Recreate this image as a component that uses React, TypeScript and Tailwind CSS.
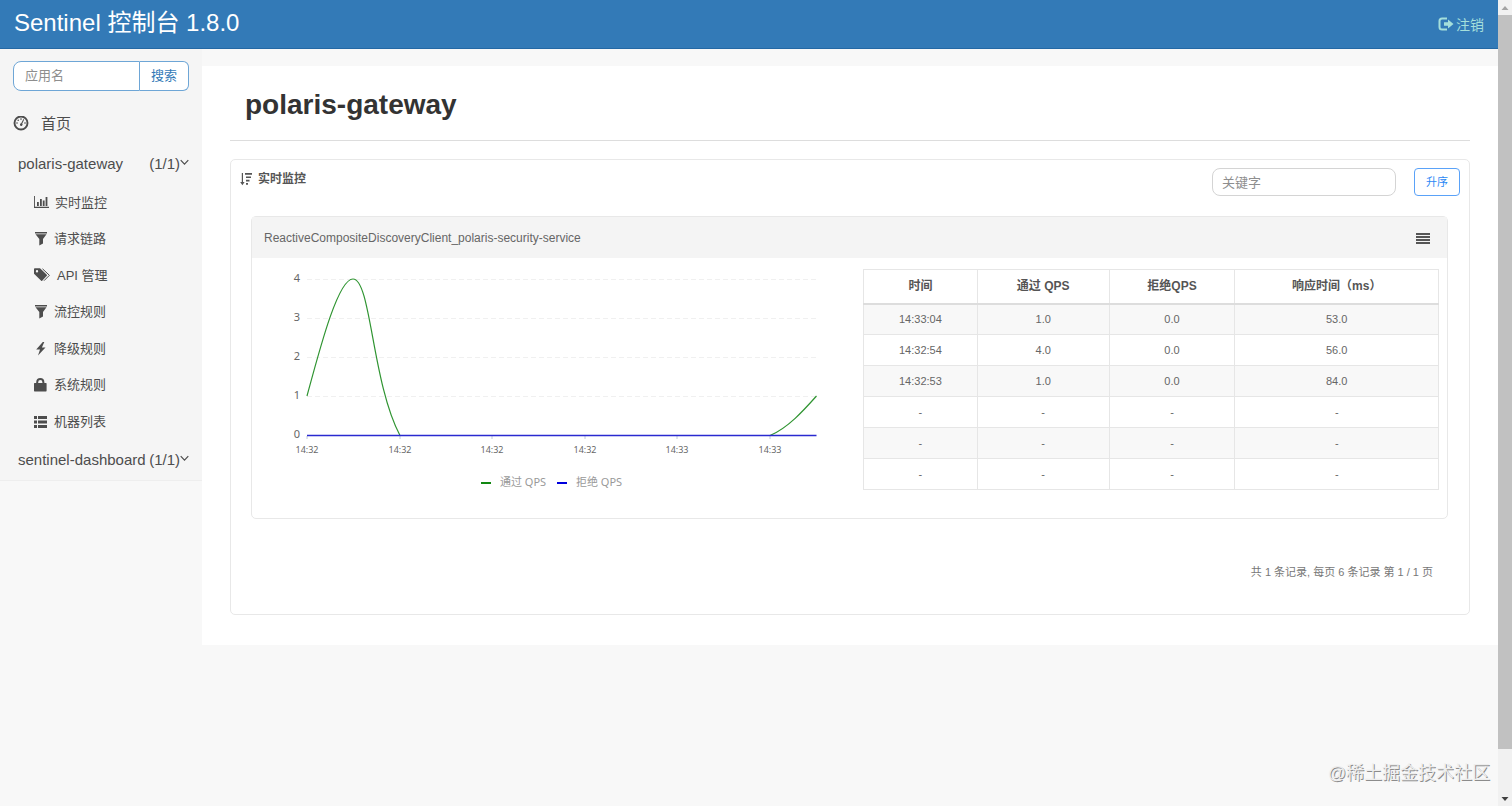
import React, { useState } from 'react';

const MENU = [
  { name: '实时监控', icon: 'stats' },
  { name: '请求链路', icon: 'filter' },
  { name: 'API 管理', icon: 'tags' },
  { name: '流控规则', icon: 'filter' },
  { name: '降级规则', icon: 'flash' },
  { name: '系统规则', icon: 'lock' },
  { name: '机器列表', icon: 'list' },
];

const METRICS = [
  ['14:33:04', '1.0', '0.0', '53.0'],
  ['14:32:54', '4.0', '0.0', '56.0'],
  ['14:32:53', '1.0', '0.0', '84.0'],
  ['-', '-', '-', '-'],
  ['-', '-', '-', '-'],
  ['-', '-', '-', '-'],
];

const Y_TICKS = [
  { label: '4', y: 21 },
  { label: '3', y: 60 },
  { label: '2', y: 99 },
  { label: '1', y: 138 },
  { label: '0', y: 177 },
];

const X_TICKS = [
  { label: '14:32', x: 55 },
  { label: '14:32', x: 148 },
  { label: '14:32', x: 240 },
  { label: '14:32', x: 333 },
  { label: '14:33', x: 425 },
  { label: '14:33', x: 518 },
];

const MenuIcon: React.FC<{ name: string }> = ({ name }) => {
  switch (name) {
    case 'stats':
      return (
        <svg width="15" height="14" viewBox="0 0 15 14" fill="currentColor">
          <path d="M0 1h.9v10.700H15v1.200H0z" />
          <path d="M3 7h1.800v4H3zM6 4h1.800v7H6zM8.800 5.500h1.800V11H8.800zM11.600 2h1.800v9h-1.800z" />
        </svg>
      );
    case 'filter':
      return (
        <svg width="14" height="14" viewBox="0 0 14 14" fill="currentColor">
          <path d="M1 0h12v1.500H1zM1.500 2.200h11L9 7v4.500L5.300 13.500V7z" />
        </svg>
      );
    case 'tags':
      return (
        <svg width="17" height="14" viewBox="0 0 17 14" fill="currentColor">
          <path fillRule="evenodd" d="M0 1.200Q0 .3.8.3H6l6.800 6.500q.5.5 0 1L8.200 12.700q-.5.5-1 0L0 5.800zM3 2a1.200 1.200 0 1 0 0 2.400A1.200 1.200 0 0 0 3 2z" />
          <path d="M8.500.8l6.900 6.500-5.400 5.400" fill="none" stroke="currentColor" strokeWidth="1" />
        </svg>
      );
    case 'flash':
      return (
        <svg width="14" height="14" viewBox="0 0 14 14" fill="currentColor">
          <path d="M8.800 0L2.200 7.400h3.800L4 13.500l7.500-8H7.900L10.300 0z" />
        </svg>
      );
    case 'lock':
      return (
        <svg width="14" height="14" viewBox="0 0 14 14" fill="currentColor">
          <path d="M.6 5h1.600V4.200Q2.400 0 6.300 0t4.100 4.200V5H12q.6 0 .6.600v7.200q0 .6-.6.600H.6q-.6 0-.6-.6V5.600Q0 5 .6 5zm3.600 0h4.200V4.200q0-2.200-2.100-2.200T4.200 4.200z" />
        </svg>
      );
    default:
      return (
        <svg width="14" height="14" viewBox="0 0 14 14" fill="currentColor">
          <path d="M0 1h3v3H0zM4 1h9v3H4zM0 5.500h3v3H0zM4 5.500h9v3H4zM0 10h3v3H0zM4 10h9v3H4z" />
        </svg>
      );
  }
};

const Chevron = () => (
  <svg width="9" height="7" viewBox="0 0 9 7" fill="none" stroke="currentColor" className="mb-1">
    <path d="M.7 1.200l3.800 3.900 3.800-3.900" strokeWidth="1.200" />
  </svg>
);

const AppItem: React.FC<{ name: string }> = ({ name }) => (
  <a href="#app" className="flex h-10 items-center justify-between pl-[18px] pr-[13px] text-[15px]">
    <span>{name}</span>
    <span className="flex items-center">
      (1/1)
      <Chevron />
    </span>
  </a>
);

const Sidebar = () => (
  <aside className="w-[202px] shrink-0">
    <div className="border-b border-[#eeeeee] bg-[#f5f5f5] pt-3 text-[#4d4d4d]">
      <form className="mx-[13px] mb-[13px] flex h-[30px]" onSubmit={(e) => e.preventDefault()}>
        <input
          type="text"
          aria-label="应用名"
          placeholder="应用名"
          className="min-w-0 flex-1 rounded-l-lg border border-[#6ea6d6] bg-white px-[11px] text-[13px] outline-none placeholder:text-[#8e8e8e]"
        />
        <button type="submit" className="w-[49px] rounded-r-md border border-l-0 border-[#6ea6d6] bg-white text-[13px] text-[#337ab7]">
          搜索
        </button>
      </form>
      <nav>
        <a href="#home" className="flex h-10 items-center gap-3 pl-[13px] text-[15px]">
          <svg width="16" height="16" viewBox="0 0 16 16" fill="currentColor">
            <circle cx="8" cy="7" r="6.500" fill="none" stroke="currentColor" strokeWidth="1.900" />
            <circle cx="4" cy="7" r=".8" />
            <circle cx="5.200" cy="4.200" r=".8" />
            <circle cx="8" cy="3.100" r=".8" />
            <circle cx="12" cy="7" r=".8" />
            <path d="M10.400 3.100l.8.400-2 4.200a1.300 1.300 0 1 1-1-.4z" />
          </svg>
          <span>首页</span>
        </a>
        <AppItem name="polaris-gateway" />
        <ul className="flex h-64 flex-col">
          {MENU.map((item) => (
            <li key={item.name} className="flex-1">
              <a href="#menu" className="flex h-full items-center gap-[6px] pl-[34px] text-[13px]">
                <MenuIcon name={item.icon} />
                <span>{item.name}</span>
              </a>
            </li>
          ))}
        </ul>
        <AppItem name="sentinel-dashboard" />
      </nav>
    </div>
  </aside>
);

const QpsChart = () => (
  <svg viewBox="0 0 611 260" className="w-full" fontFamily='"Noto Sans", "Noto Sans CJK SC", sans-serif'>
    {Y_TICKS.map((t) => (
      <g key={t.label}>
        {t.label !== '0' && (
          <line x1="55" x2="564" y1={t.y + 0.5} y2={t.y + 0.5} stroke="#f0f0f0" strokeDasharray="5 3" />
        )}
        <text x="48" y={t.y + 3} textAnchor="end" fontSize="11" fill="#666666">{t.label}</text>
      </g>
    ))}
    {X_TICKS.map((t) => (
      <g key={t.x}>
        <line x1={t.x} x2={t.x} y1="178" y2="181" stroke="#c0c8dc" />
        <text x={t.x} y="195" textAnchor="middle" fontSize="9" fill="#666666">{t.label}</text>
      </g>
    ))}
    <path
      d="M55 138C68 90 86 21 101 21C119 21 120 125 148 177.500H518C536 170 552 152 564.500 138"
      fill="none"
      stroke="#2f9431"
      strokeWidth="1.200"
    />
    <path d="M55 177.500H564.500" stroke="#2a2ad0" strokeWidth="1.500" />
    <rect x="229" y="224" width="10" height="2" fill="#118811" />
    <text x="248" y="228" fontSize="11" fill="#999999">通过 QPS</text>
    <rect x="305" y="224" width="10" height="2" fill="#0000dd" />
    <text x="324" y="228" fontSize="11" fill="#999999">拒绝 QPS</text>
  </svg>
);

const MetricTable = () => (
  <table className="mt-[11px] w-full table-fixed border-collapse border border-[#e6e6e6] text-center text-[11px] text-[#666666]">
    <colgroup>
      <col className="w-[19.8%]" />
      <col className="w-[22.9%]" />
      <col className="w-[21.9%]" />
      <col />
    </colgroup>
    <thead>
      <tr className="h-[34px] border-b-2 border-[#dddddd] text-xs text-[#555555]">
        <th className="border-x border-x-[#e6e6e6] font-bold">时间</th>
        <th className="border-x border-x-[#e6e6e6] font-bold">通过 QPS</th>
        <th className="border-x border-x-[#e6e6e6] font-bold">拒绝QPS</th>
        <th className="border-x border-x-[#e6e6e6] font-bold">响应时间（ms）</th>
      </tr>
    </thead>
    <tbody>
      {METRICS.map((row, i) => (
        <tr key={i} className="h-[31px] odd:bg-[#f8f8f8]">
          {row.map((cell, j) => (
            <td key={j} className="border border-[#e6e6e6]">{cell}</td>
          ))}
        </tr>
      ))}
    </tbody>
  </table>
);

const MetricCard = () => (
  <section className="ml-5 mr-[21px] rounded-[5px] border border-[#e8e8e8]">
    <header className="flex h-[41px] items-center justify-between bg-[#f4f4f4] pl-3 pr-[17px] text-xs text-[#666666]">
      <span>ReactiveCompositeDiscoveryClient_polaris-security-service</span>
      <button type="button" aria-label="列表">
        <svg width="14" height="12" viewBox="0 0 14 12" fill="#555555">
          <path d="M0 1h14v2H0zM0 4h14v2H0zM0 7h14v2H0zM0 10h14v2H0z" />
        </svg>
      </button>
    </header>
    <div className="grid grid-cols-[611fr_576fr] items-start pr-2">
      <QpsChart />
      <MetricTable />
    </div>
  </section>
);

const Scrollbar = () => (
  <div className="flex w-[14px] shrink-0 flex-col items-center bg-[#f1f1f1]">
    <svg width="14" height="15" viewBox="0 0 14 15" className="shrink-0">
      <path d="M3.500 10L7 6l3.500 4z" fill="#a3a3a3" />
    </svg>
    <div className="w-full flex-[734] bg-[#c1c1c1]" />
    <div className="flex-[42]" />
    <svg width="14" height="15" viewBox="0 0 14 15" className="shrink-0">
      <path d="M3.500 6L7 10l3.500-4z" fill="#404040" />
    </svg>
  </div>
);

const App = () => {
  const [keyword, setKeyword] = useState('');
  const [ascending, setAscending] = useState(true);

  return (
    <div className="relative flex min-h-screen bg-[#f8f8f8] font-['Liberation_Sans','Noto_Sans_CJK_SC',sans-serif] text-[#333333]">
      <div className="flex min-w-0 flex-1 flex-col">
        <header className="flex h-[49px] items-center justify-between border-b border-[#2468a4] bg-[#337ab7] px-[14px]">
          <h1 className="pb-0.5 text-2xl leading-8 text-white">Sentinel 控制台 1.8.0</h1>
          <a href="#logout" className="flex items-center gap-[2px] pt-0.5 text-sm text-[#a5dfdb]">
            <svg width="16" height="14" viewBox="0 0 16 14" className="mb-0.5">
              <path d="M9 1.500H4Q1.500 1.500 1.500 4v6q0 2.500 2.500 2.500h5" fill="none" stroke="currentColor" strokeWidth="2" />
              <path d="M6 5.300h4V2.500L15.500 7 10 11.500V8.700H6z" fill="currentColor" />
            </svg>
            <span>注销</span>
          </a>
        </header>

        <div className="flex">
          <Sidebar />
          <main className="min-w-0 flex-1 pt-[17px]">
            <div className="bg-white px-7 pb-[30px]">
              <h2 className="border-b border-[#dddddd] pb-4 pl-[15px] pt-[19px] text-[28px] font-bold leading-[39px]">
                polaris-gateway
              </h2>

              <section className="mt-[18px] rounded-[5px] border border-[#e8e8e8]">
                <div className="flex h-14 items-start justify-between pl-[9px] pr-[9px] pt-2">
                  <h3 className="flex items-center gap-[6px] text-xs font-bold leading-[22px] text-[#555555]">
                    <svg width="12" height="14" viewBox="0 0 12 14" fill="currentColor">
                      <path d="M1.800 1h1.200v9h1.600L2.400 13.200.2 10h1.600zM5 1h7v1.800H5zM6 4.500h5v1.600H6zM6 7.800h3.500v1.600H6zM6 11h2v1.800H6z" />
                    </svg>
                    实时监控
                  </h3>
                  <div className="flex items-start">
                    <input
                      type="text"
                      aria-label="关键字"
                      placeholder="关键字"
                      value={keyword}
                      onChange={(e) => setKeyword(e.target.value)}
                      className="mr-[18px] h-7 w-[184px] rounded-lg border border-[#d4d4d4] px-[9px] text-[13px] outline-none placeholder:text-[#8e8e8e]"
                    />
                    <button
                      type="button"
                      onClick={() => setAscending(!ascending)}
                      className="h-7 w-[46px] rounded border border-[#5aa2f8] text-[11px] text-[#2b88f5]"
                    >
                      {ascending ? '升序' : '降序'}
                    </button>
                  </div>
                </div>
                <MetricCard />
                <p className="pb-[33px] pr-9 pt-11 text-right text-[11px] leading-[18px] text-[#777777]">
                  共 1 条记录, 每页 6 条记录 第 1 / 1 页
                </p>
              </section>
            </div>
          </main>
        </div>
      </div>
      <Scrollbar />
      <div className="pointer-events-none absolute bottom-5 right-[22px] text-lg leading-[26px] text-[#eeeeee] [text-shadow:1px_1px_0_#8c8c8c]">
        @稀土掘金技术社区
      </div>
    </div>
  );
};

export default App;
